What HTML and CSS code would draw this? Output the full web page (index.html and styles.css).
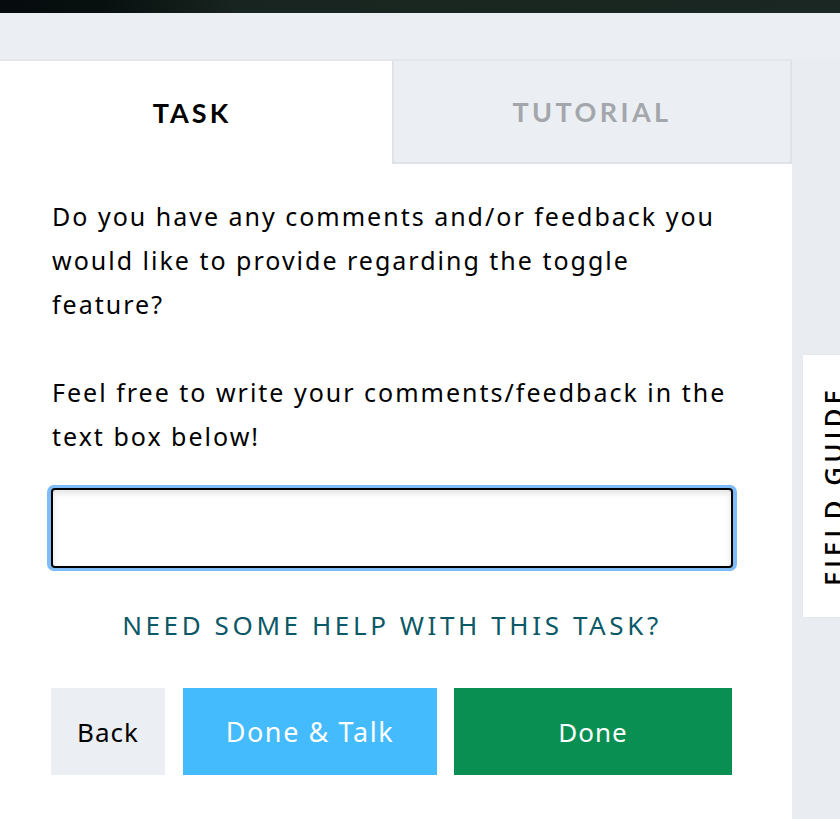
FILE: index.html
```html
<!DOCTYPE html>
<html>
<head>
<meta charset="utf-8">
<link rel="stylesheet" href="styles.css">
</head>
<body>
<div class="topbar"></div>
<div class="stage">
  <section class="panel">
    <div class="tabs">
      <div class="tab tab-active">TASK</div>
      <div class="tab tab-idle">TUTORIAL</div>
    </div>
    <div class="content">
      <p class="q">Do you have any comments and/or feedback you would like to provide regarding the toggle feature?</p>
      <p class="q q2">Feel free to write your comments/feedback in the text box below!</p>
      <div class="field"><div class="input"></div></div>
      <div class="help">NEED SOME HELP WITH THIS TASK?</div>
      <div class="buttons">
        <div class="btn btn-back">Back</div>
        <div class="btn btn-talk">Done &amp; Talk</div>
        <div class="btn btn-done">Done</div>
      </div>
    </div>
  </section>
  <aside class="side">
    <div class="guide"><span>FIELD GUIDE</span></div>
  </aside>
</div>
</body>
</html>
```
FILE: styles.css
```css
* { box-sizing: border-box; }
html, body { margin: 0; padding: 0; }
body {
  width: 840px;
  height: 819px;
  overflow: hidden;
  background: #ebeff3;
  font-family: "Noto Sans", sans-serif;
  color: #000;
}
.topbar {
  height: 13px;
  background: linear-gradient(90deg, #060b0d 0%, #07100f 12%, #18241f 28%, #1a2620 60%, #1b2722 100%);
}
.stage {
  display: flex;
  padding-top: 46px;
  height: 806px;
}
.panel {
  width: 792px;
  background: #fff;
  border-top: 2px solid #e3e6ea;
  display: flex;
  flex-direction: column;
}
.tabs {
  display: flex;
  height: 103px;
}
.tab {
  flex: 0 0 auto;
  display: flex;
  align-items: center;
  justify-content: center;
  font-family: "Lato", sans-serif;
  font-weight: 700;
  font-size: 27px;
  letter-spacing: 3px;
}
.tab-active {
  width: 392px;
  background: #fff;
  color: #000;
  padding-right: 8px;
}
.tab-idle {
  width: 400px;
  background: #ebeff3;
  color: #a3a6aa;
  border: 2px solid #dfe3e7;
  border-top: 0;
  letter-spacing: 3.4px;
}
.content {
  padding: 30px 60px 0 52px;
}
.q {
  margin: 0;
  font-size: 25px;
  line-height: 44px;
  letter-spacing: 2px;
}
.q2 {
  margin-top: 44px;
}
.field {
  margin: 27px 0 0 -5px;
  width: 690px;
  padding: 3px 4px;
  background: #7fbbf7;
  border-radius: 7px;
}
.input {
  height: 80px;
  border: 2px solid #000;
  border-radius: 4px;
  background: #fff;
  box-shadow: inset 0 3px 6px rgba(0,0,0,0.12);
}
.help {
  margin-top: 36px;
  text-align: center;
  color: #0b5866;
  font-size: 26px;
  letter-spacing: 3.6px;
  line-height: 36px;
}
.buttons {
  display: flex;
  margin-top: 45px;
  margin-left: -1px;
}
.btn {
  height: 87px;
  display: flex;
  align-items: center;
  justify-content: center;
  font-size: 26px;
  letter-spacing: 1px;
}
.btn-back {
  width: 114px;
  background: #ebeff3;
  color: #000;
}
.btn-talk {
  width: 254px;
  margin-left: 18px;
  background: #43bbfc;
  color: #fff;
  font-size: 27px;
  letter-spacing: 1.6px;
}
.btn-done {
  width: 278px;
  margin-left: 17px;
  background: #098f52;
  color: #fff;
}
.side {
  flex: 1;
  background: #e9ecf0;
  padding-top: 296px;
  padding-left: 11px;
}
.guide {
  width: 60px;
  height: 262px;
  background: #fff;
  display: flex;
  align-items: center;
  justify-content: center;
  box-shadow: 0 0 2px rgba(0,0,0,0.06);
}
.guide span {
  transform: rotate(-90deg);
  white-space: nowrap;
  font-family: "Open Sans", sans-serif;
  font-weight: 600;
  font-size: 26px;
  letter-spacing: 4px;
  color: #000;
}
```
